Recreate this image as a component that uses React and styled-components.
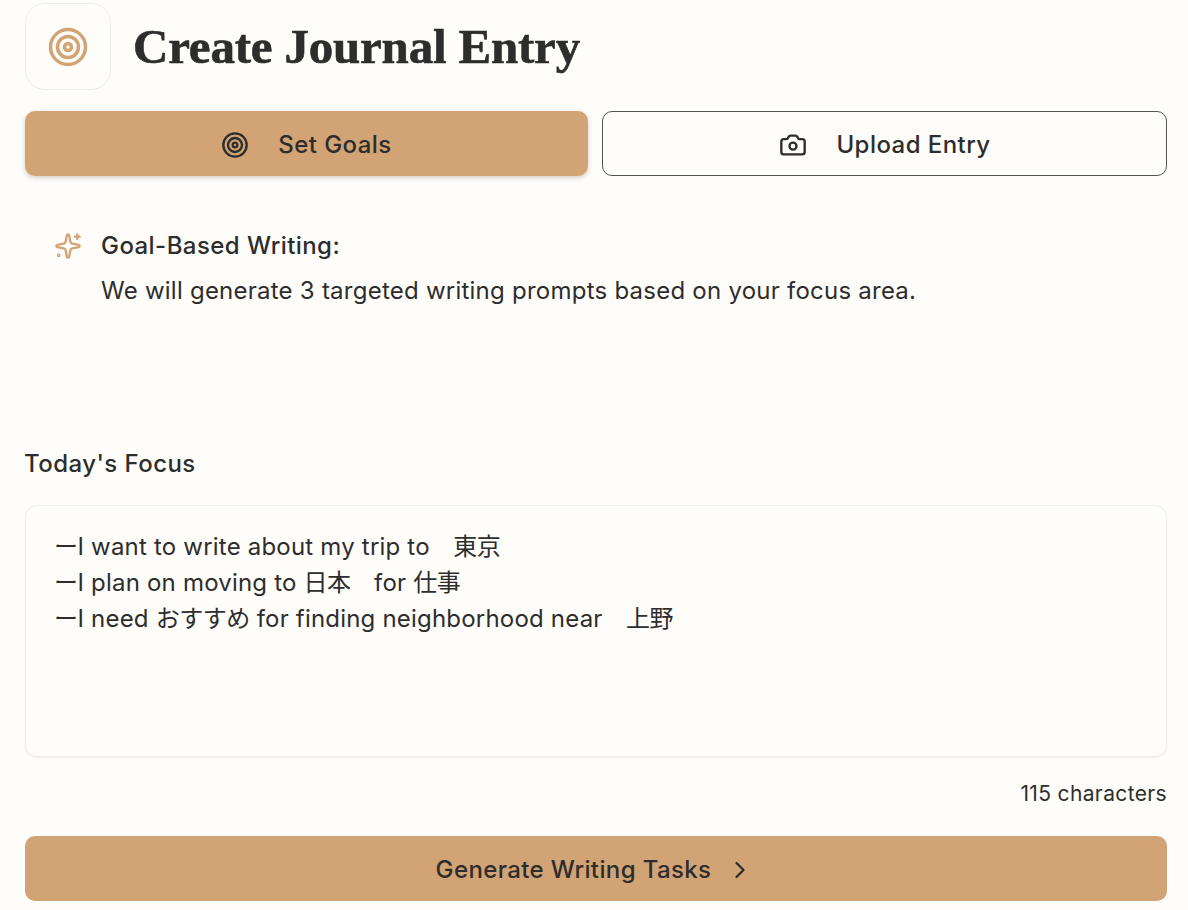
import React from "react";
import styled, { createGlobalStyle } from "styled-components";
import { Camera, ChevronRight } from "lucide-react";

const Global = createGlobalStyle`
  html, body { margin: 0; padding: 0; background: #fefdfa; }
  body { font-family: Inter, "Noto Sans CJK JP", sans-serif; color: #2d2d2d; }
  * { box-sizing: border-box; }
`;

const Page = styled.main`
  width: 1188px;
  height: 910px;
  overflow: hidden;
  padding: 3px 21px 0 25px;
  display: flex;
  flex-direction: column;
`;

const Header = styled.header`
  display: flex;
  align-items: center;
  gap: 22px;
  height: 87px;
`;

const LogoBox = styled.div`
  width: 86px;
  height: 87px;
  border: 1px solid #ecebe8;
  border-radius: 20px;
  background: #fefdfa;
  display: flex;
  align-items: center;
  justify-content: center;
`;

const Title = styled.h1`
  margin: 0;
  font-family: "Liberation Serif", serif;
  font-weight: 700;
  font-size: 49px;
  letter-spacing: -0.2px;
  -webkit-text-stroke: 0.6px #2d2d2d;
  color: #2d2d2d;
`;

const Tabs = styled.div`
  display: grid;
  grid-template-columns: 563px 565px;
  gap: 14px;
  margin-top: 21px;
`;

const Tab = styled.button`
  height: 65px;
  padding: 2px 0 0 ${(p) => (p.$active ? "0" : "1px")};
  border-radius: 10px;
  border: ${(p) => (p.$active ? "0" : "1px solid #55534f")};
  background: ${(p) => (p.$active ? "#d2a374" : "#fefdfa")};
  box-shadow: ${(p) => (p.$active ? "0 2px 5px rgba(60,40,20,.22)" : "none")};
  color: #2d2d2d;
  font: 500 24px Inter, sans-serif;
  letter-spacing: 0.45px;
  display: flex;
  align-items: center;
  justify-content: center;
  gap: 29px;
`;

const Note = styled.section`
  display: flex;
  gap: 19px;
  margin-top: 55px;
  padding-left: 29px;
`;

const NoteIcon = styled.svg`
  flex: none;
  width: 28px;
  height: 28px;
  margin-top: 1px;
  fill: none;
  stroke: #d2a374;
  stroke-width: 2;
  stroke-linecap: round;
  stroke-linejoin: round;
`;

const NoteBody = styled.div`
  font-size: 24px;
  line-height: 45px;
  margin-top: -8px;
`;

const NoteTitle = styled.div`
  font-weight: 500;
  letter-spacing: 0.44px;
`;

const NoteText = styled.div`
  font-weight: 400;
  letter-spacing: 0.24px;
`;

const FocusLabel = styled.div`
  margin-top: 133px;
  margin-left: -1px;
  font-size: 24px;
  font-weight: 500;
  letter-spacing: 0.44px;
  line-height: 36px;
`;

const FocusBox = styled.div`
  width: 1142px;
  height: 252px;
  margin-top: 23px;
  padding: 23px 30px;
  border: 1px solid #efedea;
  border-radius: 12px;
  box-shadow: 0 1px 2px rgba(0,0,0,.05);
  background: #fefdfa;
  color: #2d2d2d;
  font: 400 24px/36px Inter, "Noto Sans CJK JP", sans-serif;
`;

const FocusLine = styled.div`
  height: 36px;
  letter-spacing: 0.2px;
  white-space: pre;
  margin-left: -2px;
`;

const Cjk = styled.span`
  font-family: "Noto Sans CJK JP", sans-serif;
  line-height: 1;
  letter-spacing: -0.5px;
`;

const Count = styled.div`
  margin-top: 19px;
  text-align: right;
  font-size: 21px;
  letter-spacing: 0.36px;
  line-height: 36px;
`;

const Generate = styled.button`
  margin-top: 24px;
  padding: 2px 2px 0 0;
  height: 65px;
  width: 1142px;
  border: 0;
  border-radius: 10px;
  background: #d2a374;
  color: #2d2d2d;
  font: 500 24px Inter, sans-serif;
  letter-spacing: 0.38px;
  display: flex;
  align-items: center;
  justify-content: center;
  gap: 15px;
`;

const Target = ({ size, color, stroke }) => (
  <svg width={size} height={size} viewBox="0 0 24 24" fill="none" stroke={color} strokeWidth={stroke} aria-hidden="true">
    <circle cx="12" cy="12" r="10" />
    <circle cx="12" cy="12" r="6" />
    <circle cx="12" cy="12" r="2" />
  </svg>
);

const Sparkle = () => (
  <NoteIcon viewBox="0 0 24 24" aria-hidden="true">
    <path d="M11.017 2.814a1 1 0 0 1 1.966 0l1.051 5.558a2 2 0 0 0 1.594 1.594l5.558 1.051a1 1 0 0 1 0 1.966l-5.558 1.051a2 2 0 0 0-1.594 1.594l-1.051 5.558a1 1 0 0 1-1.966 0l-1.051-5.558a2 2 0 0 0-1.594-1.594l-5.558-1.051a1 1 0 0 1 0-1.966l5.558-1.051a2 2 0 0 0 1.594-1.594z" />
    <path d="M20 2v4M22 4h-4" />
    <circle cx="4" cy="20" r="0.6" />
  </NoteIcon>
);

export default function App() {
  return (
    <Page>
      <Global />
      <Header>
        <LogoBox>
          <Target size={42} color="#d2a374" stroke={2} />
        </LogoBox>
        <Title>Create Journal Entry</Title>
      </Header>
      <Tabs>
        <Tab $active>
          <Target size={28} color="#2d2d2d" stroke={2} />
          Set Goals
        </Tab>
        <Tab>
          <Camera size={28} strokeWidth={2} />
          Upload Entry
        </Tab>
      </Tabs>
      <Note>
        <Sparkle />
        <NoteBody>
          <NoteTitle>Goal-Based Writing:</NoteTitle>
          <NoteText>We will generate 3 targeted writing prompts based on your focus area.</NoteText>
        </NoteBody>
      </Note>
      <FocusLabel>Today's Focus</FocusLabel>
      <FocusBox>
        <FocusLine><Cjk>ー</Cjk>I want to write about my trip to<Cjk>　東京</Cjk></FocusLine>
        <FocusLine><Cjk>ー</Cjk>I plan on moving to <Cjk>日本　</Cjk>for <Cjk>仕事</Cjk></FocusLine>
        <FocusLine><Cjk>ー</Cjk>I need <Cjk>おすすめ</Cjk> for finding neighborhood near<Cjk>　上野</Cjk></FocusLine>
      </FocusBox>
      <Count>115 characters</Count>
      <Generate>
        Generate Writing Tasks
        <ChevronRight size={28} strokeWidth={2} />
      </Generate>
    </Page>
  );
}
